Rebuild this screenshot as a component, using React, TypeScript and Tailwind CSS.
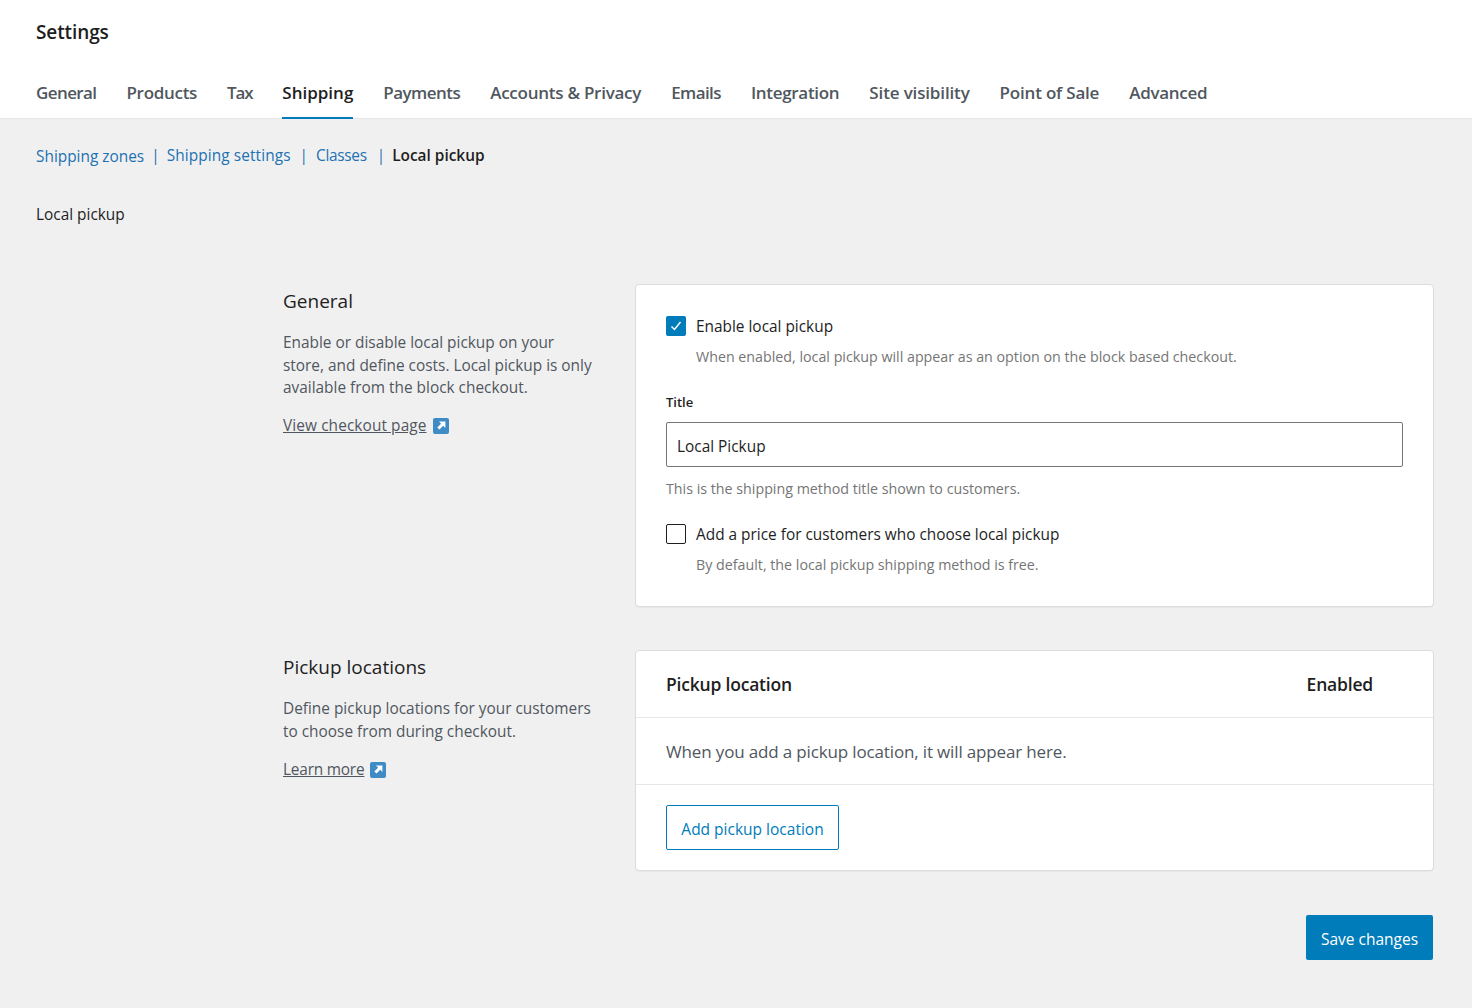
const tabs = [
  { label: "General", cls: "tracking-[-0.6px]" },
  { label: "Products", cls: "tracking-[-0.3px]" },
  { label: "Tax", cls: "tracking-[-1.2px]" },
  { label: "Shipping", cls: "" },
  { label: "Payments", cls: "tracking-[-0.55px]" },
  { label: "Accounts & Privacy", cls: "tracking-[-0.25px]" },
  { label: "Emails", cls: "tracking-[-0.6px]" },
  { label: "Integration", cls: "tracking-[-0.3px]" },
  { label: "Site visibility", cls: "tracking-[-0.15px]" },
  { label: "Point of Sale", cls: "tracking-[-0.2px]" },
  { label: "Advanced", cls: "tracking-[-0.3px]" },
];

function ExternalIcon() {
  return (
    <svg width="16" height="16" viewBox="0 0 16 16" className="shrink-0">
      <rect width="16" height="16" rx="2" fill="#3e8bc6" />
      <path d="M6 3.6h6.4V10l-2.2-2.2-3.7 3.8-2.2-2.2 3.8-3.6z" fill="#fff" />
    </svg>
  );
}

function Section({ title, body, link, linkClass, children }: { title: string; body: string[]; link: string; linkClass: string; children: React.ReactNode }) {
  return (
    <div className="flex items-start">
      <div className="w-[355px] pl-[3px] pr-[30px] shrink-0">
        <h2 className="text-[19px] leading-[24px] text-[#1e1e1e] mt-[5px]">{title}</h2>
        <div className="mt-[19px] text-[15.4px] leading-[22.5px] text-[#50575e]">
          {body.map((l) => (
            <div key={l} className="whitespace-nowrap">{l}</div>
          ))}
        </div>
        <div className={`${linkClass} flex items-center gap-[6px] text-[15.4px] leading-[22px] text-[#50575e]`}>
          <a className="underline">{link}</a>
          <ExternalIcon />
        </div>
      </div>
      {children}
    </div>
  );
}

export default function App() {
  return (
    <div className="min-h-[1008px] bg-[#f0f0f1] font-['Open_Sans',sans-serif]">
      <header className="h-[119px] bg-white border-b border-[#e6e6e7] px-[36px]">
        <h1 className="pt-[19px] text-[19px] leading-[26px] font-semibold tracking-[-0.1px] text-[#1e1e1e]">Settings</h1>
        <nav className="flex gap-[30px] mt-[32px]">
          {tabs.map((t) => (
            <a
              key={t.label}
              className={
                t.label === "Shipping"
                  ? "h-[42px] pt-[4px] text-[17px] leading-[24px] font-semibold text-[#1e1e1e] border-b-2 border-[#007cba] whitespace-nowrap"
                  : `h-[42px] pt-[4px] text-[17px] leading-[24px] font-semibold text-[#50575e] whitespace-nowrap ${t.cls}`
              }
            >
              {t.label}
            </a>
          ))}
        </nav>
      </header>

      <div className="pl-[36px] pr-[38px]">
        <div className="flex items-center pt-[25px] text-[15.4px] leading-[22px] text-[#2271b1]">
          <a className="mt-[2px]">Shipping zones</a>
          <span className="mx-[7px]">|</span>
          <a className="tracking-[0.1px]">Shipping settings</a>
          <span className="ml-[9px] mr-[8px]">|</span>
          <a className="tracking-[-0.3px]">Classes</a>
          <span className="ml-[10px] mr-[7px]">|</span>
          <span className="font-semibold text-[#1e1e1e]">Local pickup</span>
        </div>
        <p className="mt-[36px] text-[15.4px] leading-[22px] text-[#1e1e1e]">Local pickup</p>

        <div className="pl-[244px] mt-[58px] flex flex-col gap-[43px]">
          <Section
            title="General"
            body={["Enable or disable local pickup on your", "store, and define costs. Local pickup is only", "available from the block checkout."]}
            link="View checkout page"
            linkClass="mt-[15px] tracking-[0.1px]"
          >
            <div className="flex-1 h-[323px] bg-white border border-[#dcdcde] rounded-[4px] shadow-[0_1px_1px_rgba(0,0,0,0.04)] pt-[30px] px-[30px]">
              <label className="flex items-center gap-[10px] h-[22px] text-[15.4px] text-[#1e1e1e]">
                <span className="w-[20px] h-[20px] rounded-[2px] bg-[#007cba] flex items-center justify-center">
                  <svg width="14" height="14" viewBox="0 0 14 14" fill="none">
                    <path d="M2.5 7.5l3 3 6-7.5" stroke="#fff" strokeWidth="1.5" />
                  </svg>
                </span>
                <span className="pt-[2px]">Enable local pickup</span>
              </label>
              <p className="ml-[30px] mt-[9px] text-[14.25px] leading-[22px] text-[#757575]">When enabled, local pickup will appear as an option on the block based checkout.</p>
              <div className="mt-[25px] text-[13px] leading-[18px] font-semibold text-[#1e1e1e]">Title</div>
              <div className="mt-[11px] h-[45px] border border-[#757575] rounded-[2px] px-[10px] pt-[4px] flex items-center text-[15.4px] text-[#1e1e1e]">Local Pickup</div>
              <p className="mt-[11px] text-[14.25px] leading-[22px] text-[#757575]">This is the shipping method title shown to customers.</p>
              <label className="mt-[23px] flex items-center gap-[10px] h-[22px] text-[15.4px] text-[#1e1e1e]">
                <span className="w-[20px] h-[20px] rounded-[2px] bg-white border border-[#1e1e1e]" />
                <span className="pt-[2px]">Add a price for customers who choose local pickup</span>
              </label>
              <p className="ml-[30px] mt-[9px] text-[14.25px] leading-[22px] text-[#757575]">By default, the local pickup shipping method is free.</p>
            </div>
          </Section>

          <Section
            title="Pickup locations"
            body={["Define pickup locations for your customers", "to choose from during checkout."]}
            link="Learn more"
            linkClass="mt-[16px] tracking-[-0.2px]"
          >
            <div className="flex-1 h-[221px] bg-white border border-[#dcdcde] rounded-[4px] shadow-[0_1px_1px_rgba(0,0,0,0.04)]">
              <div className="h-[67px] border-b border-[#e6e6e7] pl-[30px] pr-[60px] flex items-center justify-between text-[17.5px] tracking-[-0.2px] font-semibold text-[#1e1e1e]">
                <span>Pickup location</span>
                <span>Enabled</span>
              </div>
              <div className="h-[67px] border-b border-[#e6e6e7] pl-[30px] pt-[2px] flex items-center text-[17px] tracking-[-0.15px] text-[#50575e]">When you add a pickup location, it will appear here.</div>
              <div className="pl-[30px] pt-[20px]">
                <button className="h-[45px] w-[173px] pt-[4px] bg-white border border-[#007cba] rounded-[2px] text-[15.5px] text-[#007cba]">Add pickup location</button>
              </div>
            </div>
          </Section>
        </div>

        <div className="flex justify-end mt-[44px] pr-[1px]">
          <button className="h-[45px] w-[127px] pt-[5px] bg-[#007cba] rounded-[2px] text-[15.5px] text-white">Save changes</button>
        </div>
      </div>
    </div>
  );
}
